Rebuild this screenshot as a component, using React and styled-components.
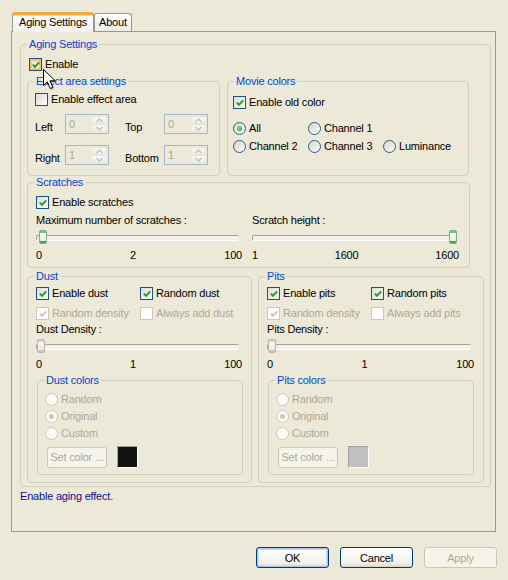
import React from "react";
import styled, { createGlobalStyle, css } from "styled-components";

const GlobalStyle = createGlobalStyle`
  html, body {
    margin: 0;
    padding: 0;
    background: #ece9d8;
  }

  body {
    font-family: "Liberation Sans", Arial, sans-serif;
    font-size: 11px;
    font-weight: normal;
    letter-spacing: -0.2px;
    color: #000;
  }

  * {
    box-sizing: border-box;
  }
`;

const Checkbox = ({ checked, disabled, hover, children }) => (
  <Choice $disabled={disabled}>
    <CheckBox $disabled={disabled} $hover={hover}>
      {checked && (
        <svg width="8" height="8" viewBox="0 0 8 8">
          <path
            d="M0.8 3.6 L3 5.8 L7.2 1.4"
            stroke={disabled ? "#cac8bb" : "#21a121"}
            strokeWidth="2"
            fill="none"
          />
        </svg>
      )}
    </CheckBox>
    {children}
  </Choice>
);

const Radio = ({ checked, disabled, children }) => (
  <Choice $disabled={disabled}>
    <RadioDot $disabled={disabled} $checked={checked} />
    {children}
  </Choice>
);

const Spin = ({ value }) => (
  <SpinBox>
    <SpinValue>{value}</SpinValue>
    <SpinButtons>
      <SpinHalf>
        <svg width="7" height="5" viewBox="0 0 7 5">
          <path d="M0.5 4 L3.5 1 L6.5 4" stroke="#c5c3b8" strokeWidth="1.4" fill="none" />
        </svg>
      </SpinHalf>
      <SpinHalf>
        <svg width="7" height="5" viewBox="0 0 7 5">
          <path d="M0.5 1 L3.5 4 L6.5 1" stroke="#c5c3b8" strokeWidth="1.4" fill="none" />
        </svg>
      </SpinHalf>
    </SpinButtons>
  </SpinBox>
);

const Slider = ({ caption, at, dim, scale, width, top }) => (
  <SliderBlock $w={width} $mt={top}>
    <Caption>{caption}</Caption>
    <Track>
      <Thumb $dim={dim} style={{ left: `${1 + Math.round(at * 196)}px` }} />
    </Track>
    <Scale>
      {scale.map((s, i) => (
        <span key={i}>{s}</span>
      ))}
    </Scale>
  </SliderBlock>
);

const ColorGroup = ({ title, swatch }) => (
  <Group $w={206} $ml={1} $mt={3}>
    <Legend>{title}</Legend>
    <GroupBody $pad="6px 0 6px 7px">
      <RadioStack>
        <Radio disabled>Random</Radio>
        <Radio disabled checked>Original</Radio>
        <Radio disabled>Custom</Radio>
      </RadioStack>
      <ColorRow>
        <SmallButton disabled>Set color ...</SmallButton>
        <Swatch $color={swatch} />
      </ColorRow>
    </GroupBody>
  </Group>
);

const App = () => {
  return (
    <>
      <GlobalStyle />
      <Dialog>
        <TabStrip>
          <Tab $active>Aging Settings</Tab>
          <Tab>About</Tab>
        </TabStrip>

        <Panel>
          <Group $w={471}>
            <Legend>Aging Settings</Legend>
            <GroupBody $pad="7px 0 3px 6px">
              <Row $pl={2}>
                <Checkbox checked hover>Enable</Checkbox>
              </Row>

              <Columns $gap={7} $mt={4}>
                <Group $w={193}>
                  <Legend>Effect area settings</Legend>
                  <GroupBody $pad="5px 0 10px 7px">
                    <Checkbox>Enable effect area</Checkbox>
                    <SpinGrid>
                      <FieldLabel>Left</FieldLabel>
                      <Spin value="0" />
                      <FieldLabel>Top</FieldLabel>
                      <Spin value="0" />
                      <FieldLabel>Right</FieldLabel>
                      <Spin value="1" />
                      <FieldLabel>Bottom</FieldLabel>
                      <Spin value="1" />
                    </SpinGrid>
                  </GroupBody>
                </Group>

                <Group $w={242}>
                  <Legend>Movie colors</Legend>
                  <GroupBody $pad="8px 0 0 5px">
                    <Checkbox checked>Enable old color</Checkbox>
                    <RadioGrid>
                      <Radio checked>All</Radio>
                      <Radio>Channel 1</Radio>
                      <span />
                      <Radio>Channel 2</Radio>
                      <Radio>Channel 3</Radio>
                      <Radio>Luminance</Radio>
                    </RadioGrid>
                  </GroupBody>
                </Group>
              </Columns>

              <Group $w={443}>
                <Legend>Scratches</Legend>
                <GroupBody $pad="7px 0 5px 8px">
                  <Checkbox checked>Enable scratches</Checkbox>
                  <Columns $gap={10} $mt={5}>
                    <Slider
                      width={206}
                      caption="Maximum number of scratches :"
                      at={0.01}
                      scale={["0", "2", "100"]}
                    />
                    <Slider
                      width={207}
                      caption="Scratch height :"
                      at={1}
                      scale={["1", "1600", "1600"]}
                    />
                  </Columns>
                </GroupBody>
              </Group>

              <Columns $gap={6} $mt={2}>
                <Group $w={225}>
                  <Legend>Dust</Legend>
                  <GroupBody $pad="4px 0 7px 8px">
                    <CheckGrid>
                      <Checkbox checked>Enable dust</Checkbox>
                      <Checkbox checked>Random dust</Checkbox>
                      <Checkbox checked disabled>Random density</Checkbox>
                      <Checkbox disabled>Always add dust</Checkbox>
                    </CheckGrid>
                    <Slider
                      width={206}
                      top={3}
                      caption="Dust Density :"
                      at={0}
                      dim
                      scale={["0", "1", "100"]}
                    />
                    <ColorGroup title="Dust colors" swatch="#111111" />
                  </GroupBody>
                </Group>

                <Group $w={226}>
                  <Legend>Pits</Legend>
                  <GroupBody $pad="4px 0 7px 8px">
                    <CheckGrid>
                      <Checkbox checked>Enable pits</Checkbox>
                      <Checkbox checked>Random pits</Checkbox>
                      <Checkbox checked disabled>Random density</Checkbox>
                      <Checkbox disabled>Always add pits</Checkbox>
                    </CheckGrid>
                    <Slider
                      width={207}
                      top={3}
                      caption="Pits Density :"
                      at={0}
                      dim
                      scale={["0", "1", "100"]}
                    />
                    <ColorGroup title="Pits colors" swatch="#c0c0c0" />
                  </GroupBody>
                </Group>
              </Columns>
            </GroupBody>
          </Group>

          <Status>Enable aging effect.</Status>
        </Panel>

        <ButtonBar>
          <PushButton $default>OK</PushButton>
          <PushButton>Cancel</PushButton>
          <PushButton disabled>Apply</PushButton>
        </ButtonBar>

        <Pointer width="14" height="22" viewBox="0 0 14 22">
          <path
            d="M0.5 0.5 L0.5 16.5 L4.3 12.8 L7.2 19.5 L9.8 18.4 L7 11.8 L12.2 11.8 Z"
            fill="#fff"
            stroke="#000"
            strokeWidth="1"
          />
        </Pointer>
      </Dialog>
    </>
  );
};

export default App;

const Dialog = styled.div`
  position: relative;
  width: 508px;
  height: 580px;
  overflow: hidden;
`;

const TabStrip = styled.div`
  display: flex;
  align-items: flex-end;
  padding: 12px 0 0 12px;
`;

const Tab = styled.div`
  position: relative;
  z-index: 1;
  height: 18px;
  padding: 0 4px;
  line-height: 17px;
  border: 1px solid #919b9c;
  border-bottom: none;
  border-radius: 3px 3px 0 0;
  background: linear-gradient(#fefefe, #ecebe6);
  white-space: nowrap;

  ${(p) =>
    p.$active &&
    css`
      height: 20px;
      width: 82px;
      margin-bottom: -1px;
      padding: 0 6px;
      line-height: 15px;
      border-top: 3px solid #f4a93a;
      box-shadow: inset 0 1px 0 #ffd772;
      background: linear-gradient(#fcfcfb, #f3f1e8);
    `}
`;

const Panel = styled.div`
  margin-left: 11px;
  width: 485px;
  height: 501px;
  padding: 6px 4px 0 8px;
  border: 1px solid #919b9c;
  background: #ece9d8;
`;

const Group = styled.fieldset`
  margin: ${(p) => `${p.$mt || 0}px 0 0 ${p.$ml || 0}px`};
  padding: 0;
  min-width: 0;
  width: ${(p) => p.$w}px;
  border: 1px solid #d0d0bf;
  border-radius: 4px;
`;

const Legend = styled.legend`
  margin-left: 6px;
  padding: 0 2px;
  line-height: 13px;
  color: #0046d5;
`;

const GroupBody = styled.div`
  display: flex;
  flex-direction: column;
  align-items: flex-start;
  padding: ${(p) => p.$pad};
`;

const Row = styled.div`
  display: flex;
  align-items: center;
  padding-left: ${(p) => p.$pl || 0}px;
`;

const Columns = styled.div`
  display: flex;
  align-items: stretch;
  gap: ${(p) => p.$gap}px;
  margin-top: ${(p) => p.$mt || 0}px;
`;

const Choice = styled.label`
  display: inline-flex;
  align-items: center;
  gap: 3px;
  line-height: 13px;
  font-weight: normal;
  white-space: nowrap;
  color: ${(p) => (p.$disabled ? "#aca899" : "#000")};
`;

const CheckBox = styled.span`
  flex: none;
  width: 13px;
  height: 13px;
  display: flex;
  align-items: center;
  justify-content: center;
  border: 1px solid ${(p) => (p.$disabled ? "#cac8bb" : "#1c5180")};
  background: ${(p) =>
    p.$disabled ? "#fff" : "linear-gradient(135deg, #dcdcd7, #fbfbf9)"};

  ${(p) =>
    p.$hover &&
    css`
      box-shadow: inset 0 0 0 2px #f9c165;
    `}
`;

const RadioDot = styled.span`
  flex: none;
  width: 13px;
  height: 13px;
  border-radius: 50%;
  display: flex;
  align-items: center;
  justify-content: center;
  border: 1px solid ${(p) => (p.$disabled ? "#cac8bb" : "#2c5b8a")};
  background: ${(p) =>
    p.$disabled ? "#fbfbf8" : "linear-gradient(135deg, #d6d5cf, #fdfdfb)"};

  &::after {
    content: "";
    display: ${(p) => (p.$checked ? "block" : "none")};
    width: 5px;
    height: 5px;
    border-radius: 50%;
    background: ${(p) =>
      p.$disabled ? "#cac8bb" : "radial-gradient(circle at 35% 35%, #7fe07a, #21a121)"};
  }
`;

const SpinGrid = styled.div`
  display: grid;
  grid-template-columns: 30px 60px 39px 44px;
  align-items: end;
  row-gap: 11px;
  margin-top: 8px;
`;

const FieldLabel = styled.span`
  line-height: 13px;
`;

const SpinBox = styled.div`
  width: 44px;
  height: 20px;
  display: flex;
  align-items: stretch;
  padding: 1px;
  border: 1px solid #a5b7c9;
  background: #ece9d8;
`;

const SpinValue = styled.span`
  flex: 1;
  padding-left: 2px;
  line-height: 16px;
  color: #aca899;
`;

const SpinButtons = styled.div`
  width: 16px;
  display: flex;
  flex-direction: column;
`;

const SpinHalf = styled.div`
  flex: 1;
  display: flex;
  align-items: center;
  justify-content: center;
  border: 1px solid #e8e6dc;
  border-radius: 2px;
  background: linear-gradient(#f8f7f3, #eeede6);
`;

const RadioGrid = styled.div`
  display: grid;
  grid-template-columns: 75px 75px auto;
  row-gap: 5px;
  margin-top: 13px;
`;

const CheckGrid = styled.div`
  display: grid;
  grid-template-columns: 104px auto;
  row-gap: 7px;
`;

const SliderBlock = styled.div`
  width: ${(p) => p.$w}px;
  margin-top: ${(p) => p.$mt || 0}px;
  display: flex;
  flex-direction: column;
`;

const Caption = styled.div`
  line-height: 13px;
  white-space: nowrap;
`;

const Track = styled.div`
  position: relative;
  height: 16px;
  margin-top: 2px;

  &::before {
    content: "";
    position: absolute;
    left: 0;
    right: 3px;
    top: 6px;
    height: 4px;
    border-top: 1px solid #a3a29d;
    border-left: 1px solid #a3a29d;
    border-bottom: 1px solid #fff;
    border-radius: 2px;
    background: #f2f1ec;
  }
`;

const Thumb = styled.span`
  position: absolute;
  top: 1px;
  width: 8px;
  height: 14px;
  border-radius: 2px;
  border: 1px solid ${(p) => (p.$dim ? "#b8b7b0" : "#87a992")};
  background: ${(p) =>
    p.$dim
      ? "linear-gradient(#d6d5cf 0 2px, #f7f7f4 2px, #ebeae4 10px, #c8c7c0 10px)"
      : "linear-gradient(#6cc86f 0 2px, #fbfbf9 2px, #ecebe5 10px, #3aab44 10px)"};
`;

const Scale = styled.div`
  display: flex;
  justify-content: space-between;
  margin-top: 4px;
  line-height: 13px;
`;

const RadioStack = styled.div`
  display: flex;
  flex-direction: column;
  gap: 4px;
`;

const ColorRow = styled.div`
  display: flex;
  align-items: center;
  gap: 10px;
  margin: 6px 0 0 2px;
`;

const SmallButton = styled.button`
  width: 60px;
  height: 21px;
  padding: 0;
  font: inherit;
  letter-spacing: inherit;
  border: 1px solid #c9c7ba;
  border-radius: 3px;
  background: #f5f4ea;
  color: #aca899;
`;

const Swatch = styled.span`
  width: 21px;
  height: 22px;
  border: 1px solid;
  border-color: #a0a0a0 #fff #fff #a0a0a0;
  background: ${(p) => p.$color};
`;

const Status = styled.div`
  margin: 3px 0 0 0;
  line-height: 13px;
  color: #10108c;
`;

const ButtonBar = styled.div`
  display: flex;
  justify-content: flex-end;
  gap: 11px;
  margin-top: 15px;
  padding-right: 11px;
`;

const PushButton = styled.button`
  width: 73px;
  height: 21px;
  padding: 0;
  font: inherit;
  letter-spacing: inherit;
  color: #000;
  border: 1px solid #003c74;
  border-radius: 3px;
  background: linear-gradient(#fefefe, #f2f1ea 80%, #d8d3c6);

  ${(p) =>
    p.$default &&
    css`
      box-shadow: inset 0 0 0 1px #a8c4f2, inset 0 0 0 2px #cddcf6;
    `}

  &:disabled {
    color: #aca899;
    border-color: #c9c7ba;
    background: #f5f4ea;
  }
`;

const Pointer = styled.svg`
  position: absolute;
  left: 43px;
  top: 69px;
  pointer-events: none;
  filter: drop-shadow(1px 1px 0 rgba(0, 0, 0, 0.25));
`;
